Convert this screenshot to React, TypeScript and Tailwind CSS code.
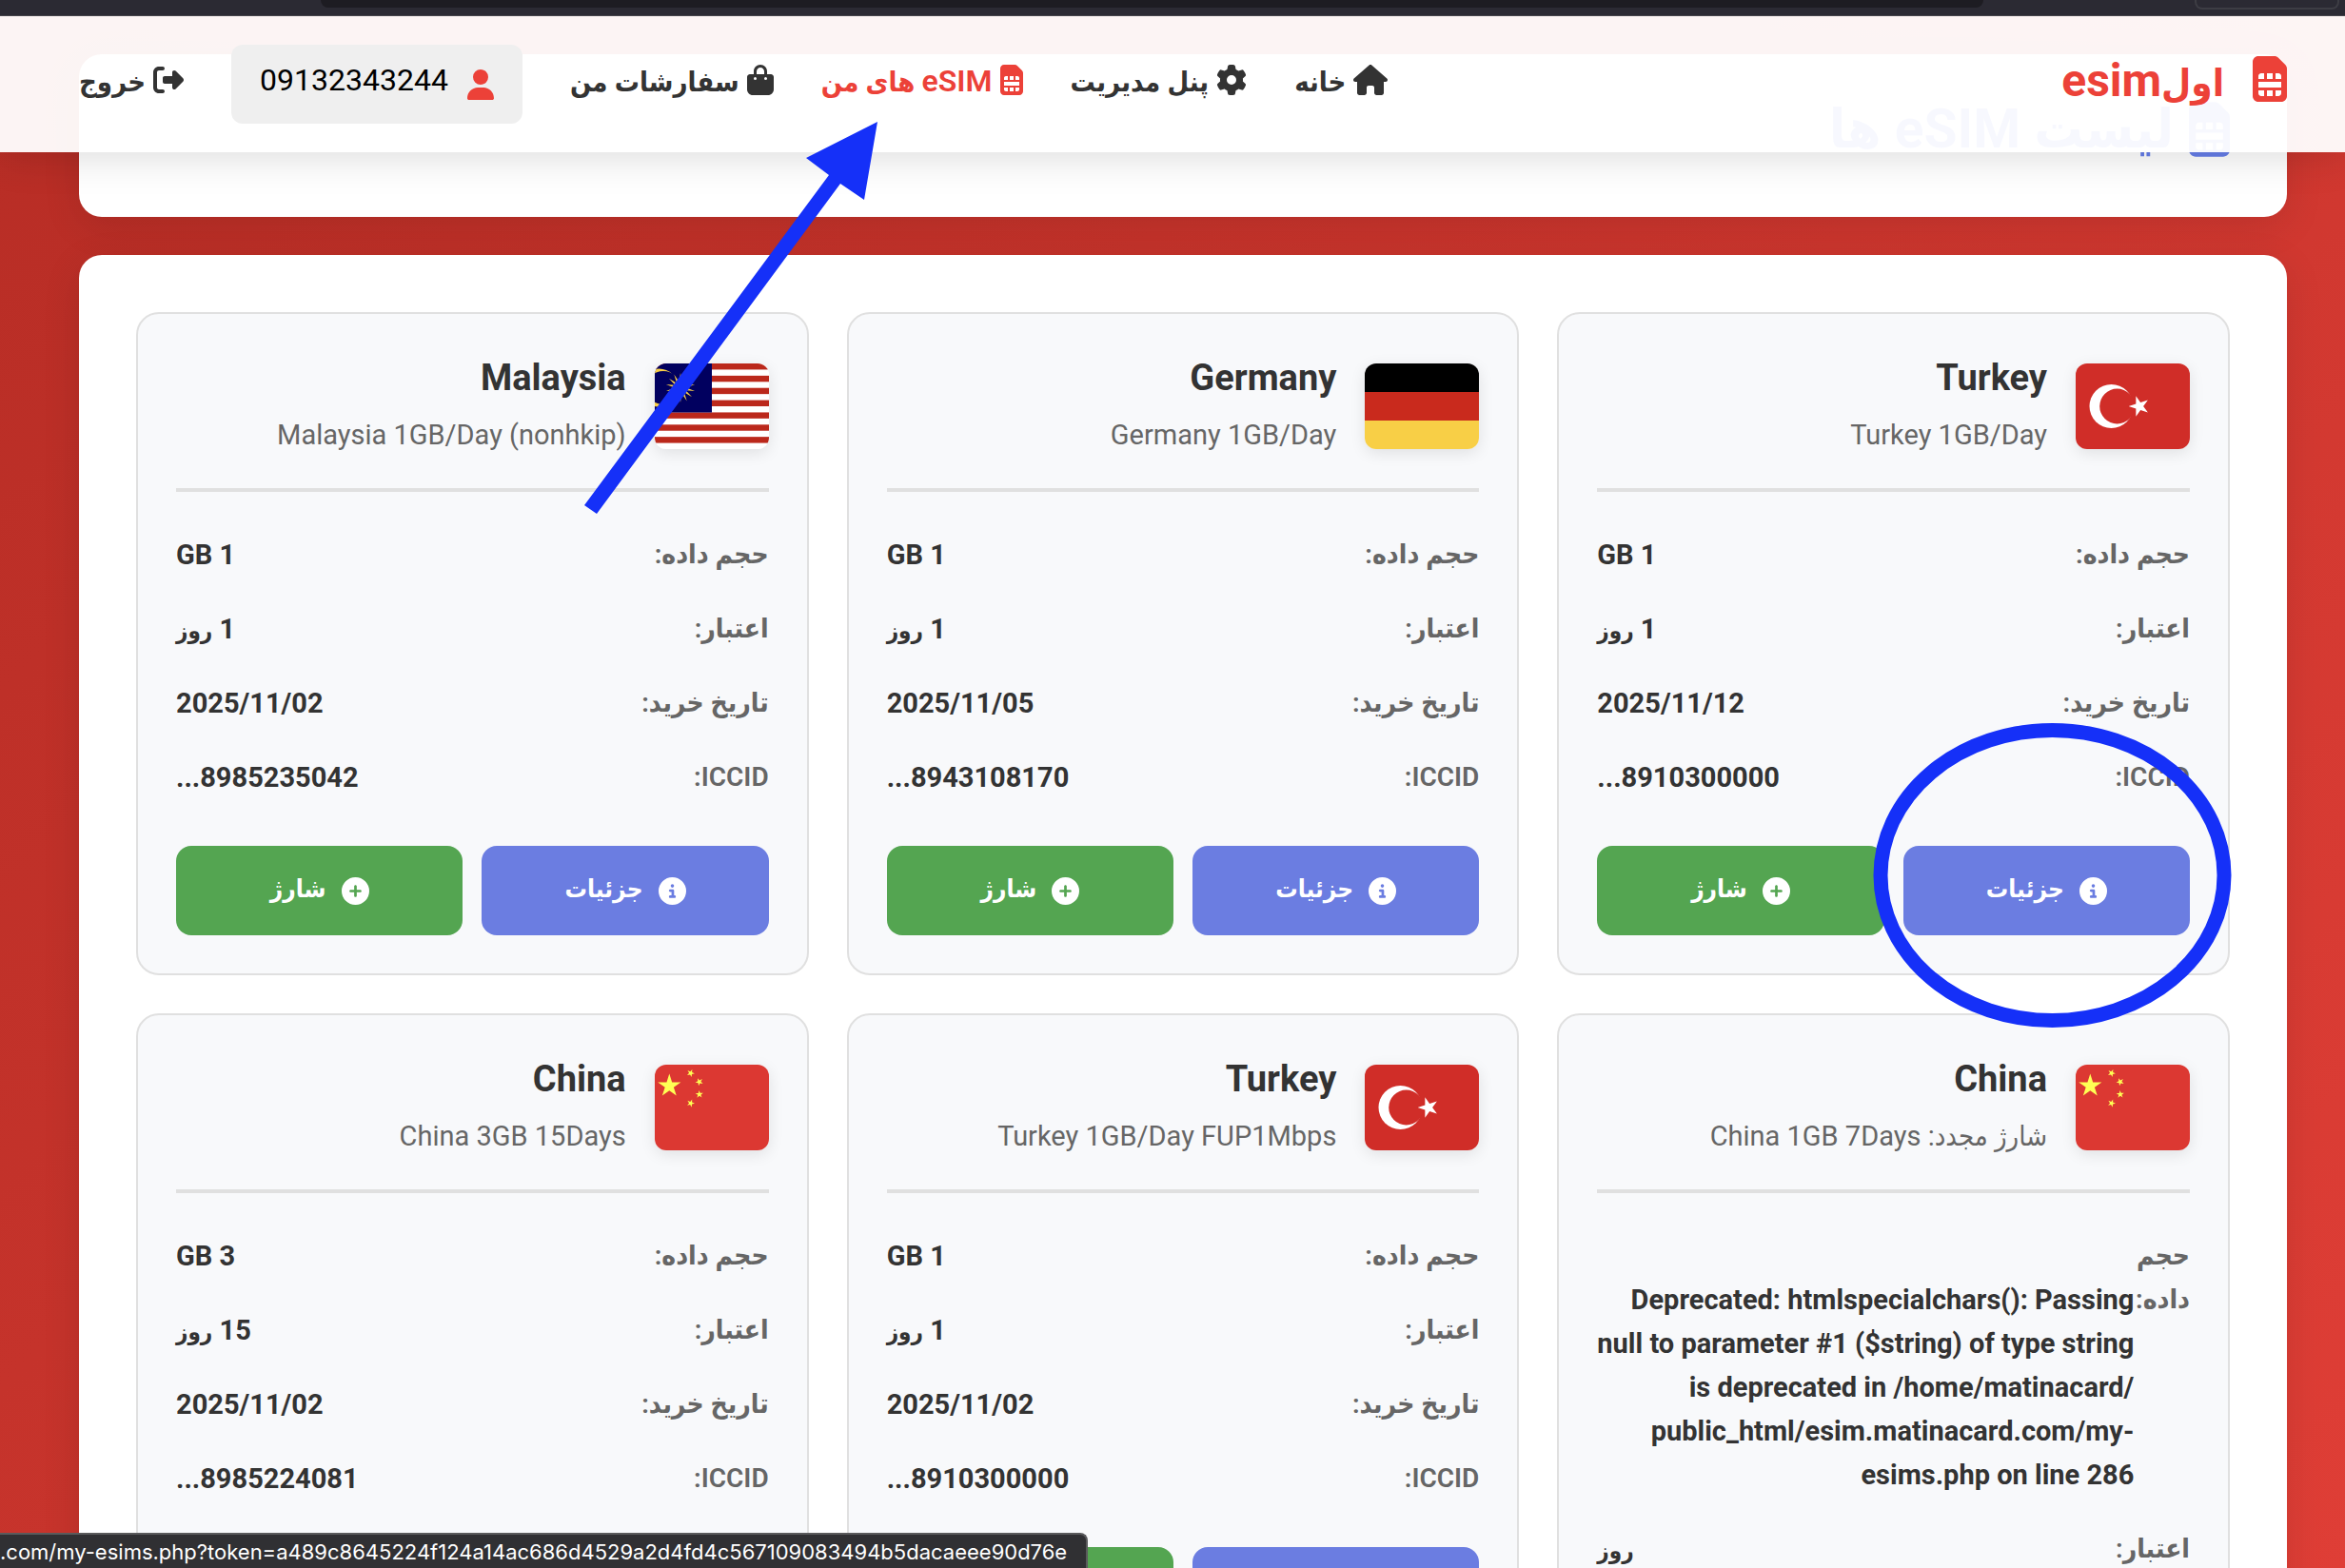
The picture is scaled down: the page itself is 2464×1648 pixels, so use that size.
import type { ReactNode } from "react";
import {
  FaBagShopping,
  FaCircleInfo,
  FaCirclePlus,
  FaGear,
  FaHouse,
  FaRightFromBracket,
  FaSimCard,
  FaUser,
} from "react-icons/fa6";

type Country = "Turkey" | "Germany" | "Malaysia" | "China";

interface Esim {
  country: Country;
  plan: string;
  data: ReactNode;
  broken?: boolean;
  days?: number;
  date: string;
  iccid: string;
}

const ESIMS: Esim[] = [
  { country: "Turkey", plan: "Turkey 1GB/Day", data: "1 GB", days: 1, date: "2025/11/12", iccid: "8910300000..." },
  { country: "Germany", plan: "Germany 1GB/Day", data: "1 GB", days: 1, date: "2025/11/05", iccid: "8943108170..." },
  { country: "Malaysia", plan: "Malaysia 1GB/Day (nonhkip)", data: "1 GB", days: 1, date: "2025/11/02", iccid: "8985235042..." },
  {
    country: "China",
    plan: "شارژ مجدد: China 1GB 7Days",
    broken: true,
    data: (
      <>
        <br />
        Deprecated: htmlspecialchars(): Passing
        <br />
        null to parameter #1 ($string) of type string
        <br />
        is deprecated in /home/matinacard/
        <br />
        public_html/esim.matinacard.com/my-
        <br />
        esims.php on line 286
      </>
    ),
    date: "2025/11/02",
    iccid: "8985224081...",
  },
  { country: "Turkey", plan: "Turkey 1GB/Day FUP1Mbps", data: "1 GB", days: 1, date: "2025/11/02", iccid: "8910300000..." },
  { country: "China", plan: "China 3GB 15Days", data: "3 GB", days: 15, date: "2025/11/02", iccid: "8985224081..." },
];

function starPoints(cx: number, cy: number, r: number, inner: number, tips: number, turn: number) {
  return Array.from({ length: tips * 2 }, (_, i) => {
    const a = ((turn + (i * 180) / tips) * Math.PI) / 180;
    const d = i % 2 === 0 ? r : r * inner;
    return `${(cx + d * Math.cos(a)).toFixed(2)},${(cy + d * Math.sin(a)).toFixed(2)}`;
  }).join(" ");
}

function FlagArt({ country }: { country: Country }) {
  switch (country) {
    case "Turkey":
      return (
        <>
          <rect width="120" height="90" fill="#d02d28" />
          <circle cx="37.5" cy="45" r="23" fill="#fff" />
          <circle cx="43.6" cy="45" r="18.4" fill="#d02d28" />
          <polygon points={starPoints(66.8, 45, 11.2, 0.382, 5, 180)} fill="#fff" />
        </>
      );
    case "Germany":
      return (
        <>
          <rect width="120" height="30" fill="#000" />
          <rect y="30" width="120" height="30" fill="#c92a1d" />
          <rect y="60" width="120" height="30" fill="#f8cf46" />
        </>
      );
    case "Malaysia":
      return (
        <>
          <rect width="120" height="90" fill="#fff" />
          {[0, 1, 2, 3, 4, 5, 6].map((i) => (
            <rect key={i} y={(i * 180) / 14} width="120" height={90 / 14} fill="#bb281b" />
          ))}
          <rect width="60" height="51.5" fill="#01005f" />
          <circle cx="4.5" cy="25.5" r="20" fill="#f8ce46" />
          <circle cx="9" cy="25.5" r="17.6" fill="#01005f" />
          <polygon points={starPoints(27, 25.5, 15.5, 0.4, 14, -90)} fill="#f8ce46" />
        </>
      );
    case "China":
      return (
        <>
          <rect width="120" height="90" fill="#dc3832" />
          <polygon points={starPoints(15.3, 22.3, 12.7, 0.382, 5, -90)} fill="#ffff54" />
          <polygon points={starPoints(37.7, 8.9, 4.3, 0.382, 5, 149)} fill="#ffff54" />
          <polygon points={starPoints(46.8, 18, 4.3, 0.382, 5, 172)} fill="#ffff54" />
          <polygon points={starPoints(46.8, 31.2, 4.3, 0.382, 5, 195)} fill="#ffff54" />
          <polygon points={starPoints(37.7, 40.5, 4.3, 0.382, 5, 219)} fill="#ffff54" />
        </>
      );
  }
}

function Row({ label, children, broken }: { label: string; children: ReactNode; broken?: boolean }) {
  return (
    <div className="flex justify-between py-4 text-[29px] leading-[46px]">
      <dt className={broken ? "w-[58px] shrink-0 text-[28px] leading-[46px] font-semibold text-[#666]" : "text-[28px] leading-[46px] font-semibold text-[#666]"}>
        {label}
      </dt>
      <dd dir={broken ? "ltr" : "rtl"} className="text-right font-bold whitespace-nowrap text-[#333]">
        {children}
      </dd>
    </div>
  );
}

function EsimCard({ esim }: { esim: Esim }) {
  return (
    <article className="rounded-3xl border-2 border-[#e0e0e0] bg-[#f8f9fb] p-10">
      <header className="flex items-center gap-[30px] border-b-4 border-[#e0e0e0] pb-[30px]">
        <svg
          viewBox="0 0 120 90"
          role="img"
          aria-label={esim.country}
          className="h-[90px] w-[120px] shrink-0 rounded-xl shadow-[0_4px_16px_rgba(0,0,0,0.1)]"
        >
          <FlagArt country={esim.country} />
        </svg>
        <div className="pb-[3px]">
          <h2 className="mb-[10px] text-[38px] leading-[54px] font-bold text-[#333]">{esim.country}</h2>
          <p className="text-[29px] leading-[46px] text-[#666]">
            {esim.country === "Malaysia" ? <bdi>{esim.plan}</bdi> : esim.plan}
          </p>
        </div>
      </header>
      <dl className="mt-[27px] mb-[33px]">
        <Row label="حجم داده:" broken={esim.broken}>{esim.data}</Row>
        <Row label="اعتبار:">
          {esim.days} <span className="text-[24px] leading-none">روز</span>
        </Row>
        <Row label="تاریخ خرید:">{esim.date}</Row>
        <Row label="ICCID:">{esim.iccid}</Row>
      </dl>
      <div className="flex gap-5 text-[26px] leading-[46px] font-bold text-white">
        <button type="button" className="flex h-[94px] flex-1 items-center justify-center gap-4 rounded-2xl bg-[#6b7de1]">
          <FaCircleInfo className="size-[29px]" />
          <span className="pb-1">جزئیات</span>
        </button>
        <button type="button" className="flex h-[94px] flex-1 items-center justify-center gap-4 rounded-2xl bg-[#54a551]">
          <FaCirclePlus className="size-[29px]" />
          <span className="pb-1">شارژ</span>
        </button>
      </div>
    </article>
  );
}

function NavLink({ icon, children, active }: { icon: ReactNode; children: ReactNode; active?: boolean }) {
  return (
    <a href="#" className={active ? "flex h-[74px] items-center gap-2 text-[#ec4138]" : "flex h-[74px] items-center gap-2 text-[#333]"}>
      {icon}
      <span className="pt-1">{children}</span>
    </a>
  );
}

function SiteHeader() {
  return (
    <header className="absolute inset-x-0 top-0 flex items-start justify-between bg-white/95 pt-[30px] pr-[61px] pb-[30px] pl-[83px] shadow-[0_4px_40px_rgba(0,0,0,0.15)]">
      <a href="#" className="flex h-[72px] items-center gap-[30px] text-[48px] leading-[56px] font-bold text-[#ec4138]">
        <FaSimCard className="h-12 w-9" />
        <span className="pt-1">
          <span className="text-[40px] leading-none">اول</span>esim
        </span>
      </a>
      <nav className="flex items-start gap-[50px] text-[29px] leading-[60px] font-semibold whitespace-nowrap">
        <NavLink icon={<FaHouse className="h-8 w-9" />}>خانه</NavLink>
        <NavLink icon={<FaGear className="size-8" />}>پنل مدیریت</NavLink>
        <NavLink active icon={<FaSimCard className="h-8 w-6" />}>
          <span className="text-[32px] leading-none">eSIM</span> های من
        </NavLink>
        <NavLink icon={<FaBagShopping className="h-8 w-7" />}>سفارشات من</NavLink>
        <button type="button" className="flex h-[83px] items-center gap-5 rounded-xl bg-[#efefef] px-[30px] text-[32px] leading-[51px] font-normal text-black">
          <FaUser className="h-8 w-7 text-[#ec4138]" />
          <span className="pb-2">09132343244</span>
        </button>
        <NavLink icon={<FaRightFromBracket className="size-8" />}>خروج</NavLink>
      </nav>
    </header>
  );
}

function BrowserEdge() {
  return (
    <div dir="ltr" className="relative z-10 flex h-[17px] items-start justify-between border-b border-[#45454b] bg-[#2b2a33]">
      <div className="ml-[337px] h-2 w-[1747px] rounded-b-lg bg-[#1d1c22]" />
      <div className="mr-[6px] h-[10px] w-[152px] rounded-b-lg border-x-2 border-b-2 border-[#3d3d44]" />
    </div>
  );
}

function Annotations() {
  return (
    <svg viewBox="0 0 2464 1648" aria-hidden="true" className="pointer-events-none absolute top-0 left-0 z-20 h-[1648px] w-[2464px]">
      <polygon points="922,128 847,166 871,184 614,531 627,540 883,193 908,210" fill="#1530f8" />
      <ellipse cx="2156.5" cy="920" rx="180.5" ry="152.5" fill="none" stroke="#1530f8" strokeWidth="15" />
    </svg>
  );
}

export default function App() {
  return (
    <div
      dir="rtl"
      className="relative h-screen overflow-hidden bg-linear-135 from-[#b72d25] to-[#df3e36] font-['Roboto','DejaVu_Sans_Condensed','DejaVu_Sans',sans-serif]"
    >
      <BrowserEdge />
      <div className="relative">
        <main className="flex flex-col gap-10 pt-10 pr-[61px] pl-[83px]">
          <section className="rounded-3xl bg-white px-[60px] py-10 shadow-[0_10px_40px_rgba(0,0,0,0.1)]">
            <h1 className="flex h-[91px] items-center gap-4 pb-[14px] text-[57px] leading-[76px] font-bold text-[#667eea]">
              <FaSimCard className="h-[58px] w-[43px]" />
              <span>لیست eSIM ها</span>
            </h1>
          </section>
          <section className="grid grid-cols-3 gap-10 rounded-3xl bg-white p-[60px] shadow-[0_10px_40px_rgba(0,0,0,0.1)]">
            {ESIMS.map((esim, i) => (
              <EsimCard key={i} esim={esim} />
            ))}
          </section>
        </main>
        <SiteHeader />
      </div>
      <div
        dir="ltr"
        className="absolute bottom-0 left-0 z-10 h-[37px] rounded-tr-lg border-t-2 border-r-2 border-[#5a5a5c] bg-[#303033] pr-5 font-['Inter',sans-serif] text-[22px] leading-[36px] text-white"
      >
        .com/my-esims.php?token=a489c8645224f124a14ac686d4529a2d4fd4c567109083494b5dacaeee90d76e
      </div>
      <Annotations />
    </div>
  );
}
